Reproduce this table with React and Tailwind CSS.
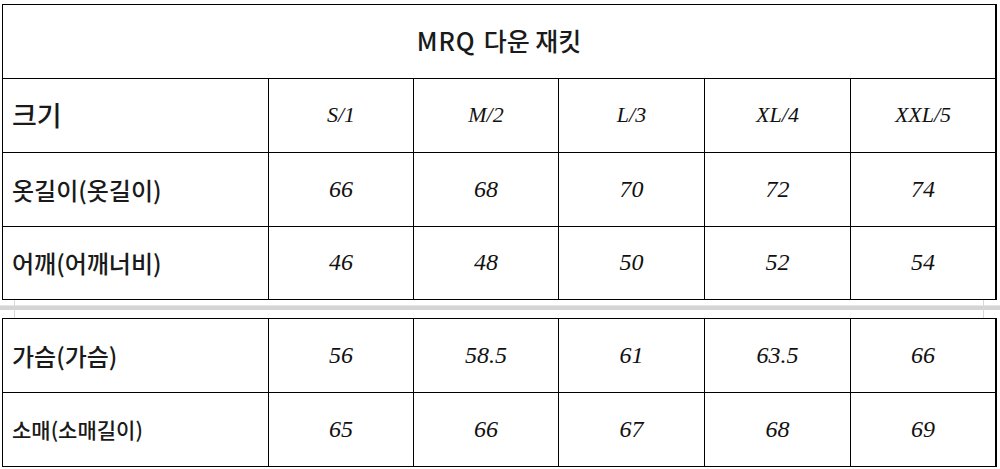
import React from "react";

const KR = { fontFamily: '"Noto Sans CJK KR", "Noto Sans", sans-serif' };
const SERIF = { fontFamily: '"Liberation Serif", "DejaVu Serif", serif' };

const cols = ["w-[266px]", "w-[145px]", "w-[145px]", "w-[146px]", "w-[146px]", "flex-1"];

function Row({ label, labelClass, values, h, header }) {
  return (
    <div className={`flex border-b border-black ${h}`}>
      <div
        className={`${cols[0]} shrink-0 border-r border-black flex items-center pl-[9px] text-[#1a1a1a] font-medium ${labelClass}`}
        style={KR}
      >
        {label}
      </div>
      {values.map((v, i) => (
        <div
          key={i}
          className={`${cols[i + 1]} ${i < 4 ? "border-r border-black shrink-0" : ""} flex items-center justify-center italic text-[#111] pb-[2px] ${header ? "text-[22px]" : "text-[24px]"}`}
          style={SERIF}
        >
          {v}
        </div>
      ))}
    </div>
  );
}

export default function App() {
  return (
    <div className="w-[1000px] h-[469px] bg-white pt-[4px] pl-[2px] overflow-hidden">
      <div className="w-[995px] border-t border-l border-r-2 border-black">
        <div
          className="h-[74px] border-b border-black flex items-center justify-center text-[25px] text-[#1a1a1a] font-medium pb-[2px]"
          style={KR}
        >
          <span className="tracking-[1px]">MRQ</span>
          <span className="ml-[8px]">다운 재킷</span>
        </div>
        <Row
          label="크기"
          labelClass="text-[27px]"
          header
          values={["S/1", "M/2", "L/3", "XL/4", "XXL/5"]}
          h="h-[74px]"
        />
        <Row
          label="옷길이(옷길이)"
          labelClass="text-[24px]"
          values={["66", "68", "70", "72", "74"]}
          h="h-[74px]"
        />
        <Row
          label="어깨(어깨너비)"
          labelClass="text-[24px]"
          values={["46", "48", "50", "52", "54"]}
          h="h-[73px]"
        />
      </div>
      <div className="relative h-[18px] -ml-[2px] w-[1000px] flex flex-col">
        <div className="h-[5px]" />
        <div className="h-[1px] bg-[#e6e6e6]" />
        <div className="h-[4px] bg-[#d4d4d4]" />
        <div className="absolute left-[14px] top-0 h-[18px] w-px bg-[#d8d8d8]" />
        <div className="absolute left-[983px] top-0 h-[18px] w-px bg-[#d8d8d8]" />
      </div>
      <div className="w-[995px] border-t border-l border-r-2 border-black">
        <Row
          label="가슴(가슴)"
          labelClass="text-[24px]"
          values={["56", "58.5", "61", "63.5", "66"]}
          h="h-[74px]"
        />
        <Row
          label="소매(소매길이)"
          labelClass="text-[21px]"
          values={["65", "66", "67", "68", "69"]}
          h="h-[74px]"
        />
      </div>
    </div>
  );
}
